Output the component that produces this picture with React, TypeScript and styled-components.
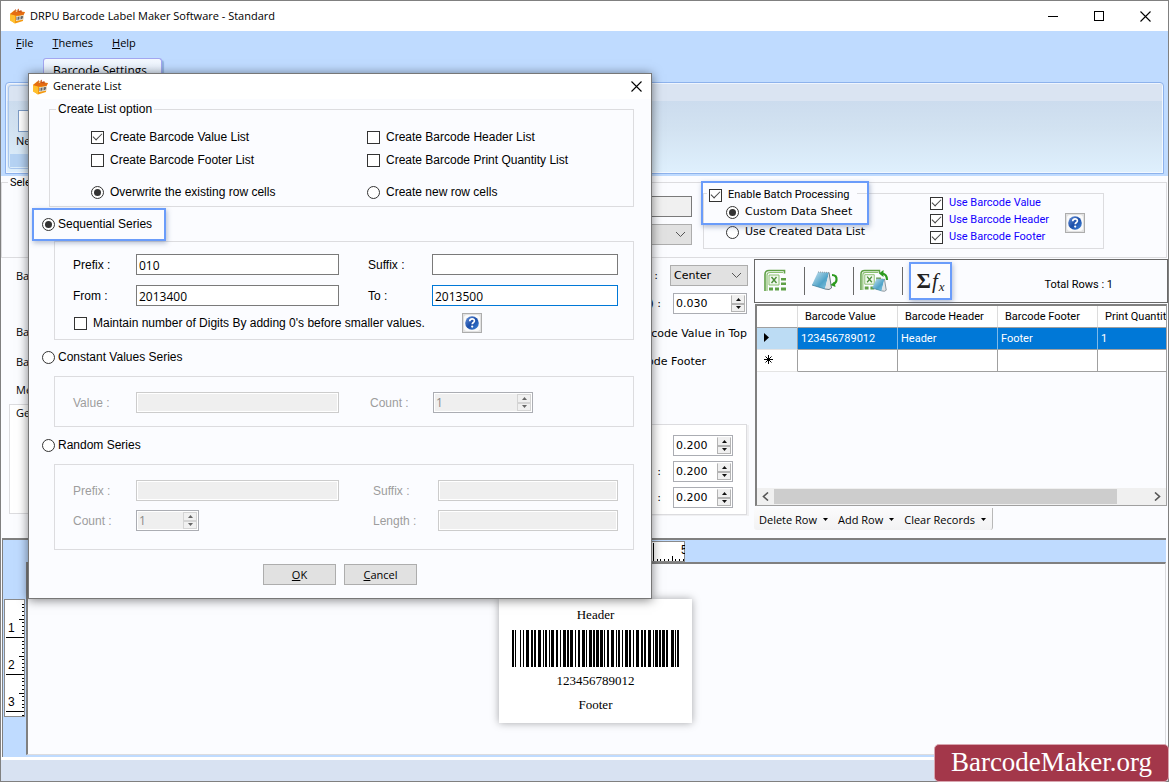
import React from 'react';
import styled, { createGlobalStyle, css } from 'styled-components';

const ui = '"Open Sans", "Noto Sans", sans-serif';
const sans = '"Liberation Sans", Arial, sans-serif';
const compact = 'Roboto, "Liberation Sans", sans-serif';
const wide = '"DejaVu Sans", Verdana, sans-serif';
const serif = '"Liberation Serif", "Times New Roman", serif';

const paper = '#fbfcff';
const sky = '#bfdbff';
const line = '#dcdcdf';
const accent = '#6a9cfa';

const GlobalStyle = createGlobalStyle`
  *, *::before, *::after { box-sizing: border-box; }
  body { margin: 0; font: 12px ${sans}; color: #000; }
  button, input, select { font: inherit; color: inherit; }
`;

/* ---------- shared controls ---------- */

const markBase = css`
  appearance: none;
  flex: none;
  display: grid;
  place-items: center;
  width: 13px;
  height: 13px;
  margin: 0;
  background: #fff;
  border: 1px solid #333;
`;

const Check = styled.input.attrs({ type: 'checkbox' })`
  ${markBase}
  &:checked::before {
    content: '';
    width: 9px;
    height: 5px;
    margin-top: -3px;
    border: solid #444;
    border-width: 0 0 1px 1px;
    transform: rotate(-45deg);
  }
`;

const Radio = styled.input.attrs({ type: 'radio' })`
  ${markBase}
  border-radius: 50%;
  &:checked::before {
    content: '';
    width: 7px;
    height: 7px;
    border-radius: 50%;
    background: #333;
  }
`;

const Choice = styled.label<{ $gap?: number }>`
  display: flex;
  align-items: center;
  gap: ${(p) => p.$gap ?? 6}px;
  height: 14px;
  line-height: 14px;
  white-space: nowrap;
`;

const TextBox = styled.input`
  width: 100%;
  height: 21px;
  padding: 2px 2px 0;
  border: 1px solid #7a7a7a;
  border-radius: 0;
  background: #fff;
  font: 12px ${ui};
  outline: none;
  &:disabled {
    border-color: #ccc;
    background: #efefef;
    box-shadow: inset 0 0 0 1px #fff;
  }
`;

const ActiveTextBox = styled(TextBox)`
  border-color: #0078d7;
`;

const SpinFrame = styled.div<{ $width: number }>`
  display: flex;
  width: ${(p) => p.$width}px;
  height: 21px;
  padding: 1px;
  border: 1px solid #abadb3;
  background: #fff;
`;

const SpinInput = styled.input<{ $font: string }>`
  flex: 1;
  min-width: 0;
  padding: 0 1px;
  border: 0;
  background: #fff;
  font: ${(p) => p.$font};
  outline: none;
  &:disabled { background: #efefef; color: #8a8a8a; }
`;

const SpinButtons = styled.div`
  display: grid;
  grid-template-rows: 1fr 1fr;
  width: 14px;
`;

const SpinButton = styled.button`
  display: grid;
  place-items: center;
  padding: 0;
  border: 1px solid #b4b4b4;
  background: #f0f0f0;
  color: #111;
  &:first-child { border-top-color: #f0f0f0; }
  &:disabled { color: #666; border-color: #d4d4d4; }
`;

const Up = () => (
  <svg width="5" height="3" viewBox="0 0 5 3"><path d="M0 3h5L2.500 0z" fill="currentColor" /></svg>
);
const Down = () => (
  <svg width="5" height="3" viewBox="0 0 5 3"><path d="M0 0h5L2.500 3z" fill="currentColor" /></svg>
);

function Spin({ id, label, value, width, font, disabled }: {
  id?: string; label?: string; value: string; width: number; font: string; disabled?: boolean;
}) {
  return (
    <SpinFrame $width={width}>
      <SpinInput id={id} aria-label={label} defaultValue={value} $font={font} disabled={disabled} />
      <SpinButtons>
        <SpinButton type="button" aria-label="Increase" disabled={disabled}><Up /></SpinButton>
        <SpinButton type="button" aria-label="Decrease" disabled={disabled}><Down /></SpinButton>
      </SpinButtons>
    </SpinFrame>
  );
}

const SelectFrame = styled.div<{ $width: number; $size: number }>`
  display: grid;
  grid-template-columns: 1fr 16px;
  align-items: center;
  width: ${(p) => p.$width}px;
  height: 21px;
  border: 1px solid #adadad;
  background: #e1e1e1;
  color: #333;
  select {
    grid-area: 1 / 1 / 2 / 3;
    appearance: none;
    height: 19px;
    padding: 0 3px;
    border: 0;
    background: transparent;
    color: #000;
    font: ${(p) => p.$size}px ${wide};
  }
  svg { grid-area: 1 / 2; pointer-events: none; }
`;

const Chevron = () => (
  <svg width="11" height="7" viewBox="0 0 11 7"><path d="M1 1l4.500 4.500L10 1" fill="none" stroke="#555" /></svg>
);

const HelpButton = styled.button`
  display: grid;
  place-items: center;
  flex: none;
  width: 20px;
  height: 20px;
  padding: 0;
  border: 1px solid #adadad;
  background: #e1e1e1;
`;

const HelpIcon = () => (
  <svg width="16" height="16" viewBox="0 0 16 16">
    <defs>
      <linearGradient id="orb" x1="0" y1="0" x2="1" y2="1">
        <stop offset="0" stopColor="#6b96dc" />
        <stop offset="0.500" stopColor="#1c4ea8" />
        <stop offset="1" stopColor="#3f86dc" />
      </linearGradient>
    </defs>
    <rect width="16" height="16" rx="3" fill="#fafafa" />
    <circle cx="8" cy="8" r="6.800" fill="url(#orb)" />
    <path d="M5.700 6.200c0-3.200 4.900-3 4.700-.2-.1 1.500-2.200 1.600-2.200 3.300" fill="none" stroke="#fff" strokeWidth="1.700" />
    <circle cx="8.200" cy="11.600" r="1.100" fill="#fff" />
  </svg>
);

const Group = styled.fieldset`
  min-width: 0;
  margin: 0;
  padding: 0;
  border: 1px solid ${line};
`;

const glow = css`
  border: 2px solid ${accent};
  box-shadow: 1px 2px 5px rgba(90, 110, 150, 0.45);
`;

/* ---------- icons ---------- */

const AppIcon = () => (
  <svg width="17" height="16" viewBox="0 0 17 16">
    <path d="M1 6l4-3.500 11 1.500-1.500 2L14 13 6 15.500 1 12z" fill="#f59a11" />
    <path d="M1 6l5 1.200V15.500L1 12.500z" fill="#ffc02e" />
    <path d="M1 6l4.500-3 10.500 1.300L14.500 7 6 7.500z" fill="#e56d12" />
    <path d="M5 3.500l1.500-2.500 1 2 2-2.500.8 2.500 2-1 .7 2.500z" fill="#c9531a" />
    <path d="M6.500 3l1.500.5 1-1.200" stroke="#ffe08a" fill="none" />
    <path d="M7 8.500l7.500-1.500v4.500L7 13z" fill="#e9e6df" />
    <path d="M8 9v3M9.500 8.700v3M11 8.400v3M12.500 8.100v3M13.600 8v2.500" stroke="#444" strokeWidth=".8" />
  </svg>
);

const SheetShape = ({ s }: { s: number }) => (
  <g transform={`scale(${s})`}>
    <path d="M1 22V5.500Q1 1.500 5 1.500h15.500v3" fill="none" stroke="#5fa046" strokeWidth="1.600" />
    <path d="M3 22V6Q3 3.500 6 3.500h13" fill="none" stroke="#8cc070" strokeWidth="1.200" />
    <path d="M5 6h10v10H5z" fill="#f2f8ef" stroke="#8cc070" />
    <path d="M7.500 8l5 6M12.500 8l-5 6" stroke="#4d8f3a" strokeWidth="1.400" />
    <path d="M17 9h5v2.400h-5zM17 13.500h5v2.400h-5zM17 18.500h5v3h-5zM11 18.500h4v3h-4zM5 18.500h4v3H5z" fill="#5fa046" />
  </g>
);

const NoteShape = () => (
  <g>
    <defs>
      <linearGradient id="note" x1="0" y1="0" x2="1" y2="1">
        <stop offset="0" stopColor="#cfe6f2" />
        <stop offset="0.600" stopColor="#4fa3c8" />
        <stop offset="1" stopColor="#8dc8e2" />
      </linearGradient>
    </defs>
    <path d="M7 3l11 .5-4 16.500L1 16z" fill="url(#note)" />
    <path d="M18 3.500l3 15-3 2-4-.5z" fill="#dfe3e6" />
    <path d="M18 3.500l2.500 15.500M14 20l4 .5 2.500-1.500" fill="none" stroke="#5b6b75" strokeWidth=".9" />
    <path d="M1 16l13 4" stroke="#3d7f9e" strokeWidth=".8" />
    <path d="M7 3l11 .5" stroke="#8a979e" strokeDasharray="1 1" />
  </g>
);

const ExcelIcon = () => (
  <svg width="24" height="24" viewBox="0 0 24 24"><SheetShape s={1} /></svg>
);

const ImportIcon = () => (
  <svg width="28" height="24" viewBox="0 0 28 24">
    <NoteShape />
    <path d="M21 6q5 0 4.500 5-.3 3-3 4" fill="none" stroke="#2c9a1f" strokeWidth="2.200" />
    <path d="M24.500 18l-5-2 4-3.500z" fill="#2c9a1f" />
  </svg>
);

const ExportIcon = () => (
  <svg width="29" height="24" viewBox="0 0 29 24">
    <SheetShape s={0.95} />
    <g transform="translate(11.500 7.500) scale(.72)"><NoteShape /></g>
    <path d="M27 11q0-6-5-6.500" fill="none" stroke="#2c9a1f" strokeWidth="2.200" />
    <path d="M19 4.500l4.500-3.500v7z" fill="#2c9a1f" />
  </svg>
);

/* ---------- main window ---------- */

const Window = styled.div`
  position: relative;
  display: flex;
  flex-direction: column;
  min-width: 1169px;
  min-height: 100vh;
  border: 1px solid #808080;
  background: ${paper};
`;

const TitleBar = styled.header`
  display: flex;
  align-items: center;
  height: 30px;
  padding-left: 8px;
  background: #fff;
  font: 11px ${ui};
`;

const Caption = styled.h1`
  flex: 1;
  margin: 0;
  padding: 0 0 2px 4px;
  font: inherit;
`;

const WindowButton = styled.button`
  display: grid;
  place-items: center;
  width: 46px;
  height: 28px;
  padding: 0;
  border: 0;
  background: transparent;
`;

const MenuBar = styled.nav`
  display: flex;
  gap: 19px;
  height: 27px;
  padding: 4px 15px;
  background: ${sky};
  font: 11px/16px ${ui};
`;

const MenuItem = styled.a`
  color: #000;
  text-decoration: none;
`;

const Ribbon = styled.section`
  padding: 0 4px 2px;
  background: ${sky};
`;

const Tab = styled.button`
  display: block;
  width: 119px;
  height: 24px;
  margin-left: 38px;
  padding: 0 0 0 9px;
  border: 1px solid #a3a6f0;
  border-bottom: 0;
  border-radius: 3px 3px 0 0;
  background: linear-gradient(#f4f9ff, #d6e4f6);
  box-shadow: 2px 2px 1px #8fb0e0;
  font: 12px/20px ${ui};
  text-align: left;
`;

const RibbonPanel = styled.div`
  height: 92px;
  padding: 2px;
  border: 1px solid #8db2ec;
  border-radius: 4px 4px 0 0;
  background: linear-gradient(#dae4f2 18px, #ccdcee 18px, #d2e2f1 50%, #dff0fd);
  box-shadow: inset -1px -1px 0 #f2f8ff, inset 1px 1px 0 #eef5ff;
`;

const RibbonGroup = styled.div`
  display: flex;
  flex-direction: column;
  justify-content: space-between;
  width: 120px;
  height: 84px;
  padding: 24px 1px 1px;
  border: 1px solid #a9c6ee;
  border-radius: 3px;
`;

const RibbonButton = styled.button`
  display: flex;
  flex-direction: column;
  align-items: flex-start;
  gap: 2px;
  padding: 0 6px;
  border: 0;
  background: transparent;
  font: 11px/14px ${ui};
`;

const NewPage = styled.span`
  width: 18px;
  height: 22px;
  margin-left: 2px;
  border: 1px solid #7d9cc6;
  background: #fff;
`;

const RibbonFoot = styled.div`
  height: 13px;
  background: #b5d2f3;
`;

const TopGroup = styled(Group)`
  height: 82px;
  margin-right: 1px;
  legend { margin-left: 6px; padding: 0 2px; font: 11px/13px ${compact}; }
`;

const TopRow = styled.div`
  display: flex;
  gap: 11px;
  margin-top: -5px;
`;

const TypeColumn = styled.div`
  display: flex;
  flex-direction: column;
  align-items: flex-end;
  gap: 7px;
  width: 690px;
  padding-top: 12px;
`;

const TypeBox = styled(TextBox)`
  width: 200px;
  background: #f0f0f0;
`;

const BatchGroup = styled(Group)`
  position: relative;
  width: 401px;
  height: 65px;
  font: 11px ${wide};
  legend { margin-left: 3px; padding: 4px 8px 0 2px; font: 11px ${compact}; background: ${paper}; }
`;

const BatchRow = styled.div`
  display: flex;
  padding-left: 22px;
`;

const BatchModes = styled.div`
  display: flex;
  flex-direction: column;
  gap: 6px;
  width: 204px;
  padding-top: 3px;
`;

const BatchFields = styled.div`
  display: flex;
  flex-direction: column;
  gap: 3px;
  width: 135px;
  margin-top: -6px;
  color: #1400ff;
  font: 11px ${compact};
`;

const BatchHelp = styled.div`
  padding-top: 11px;
`;

const BatchGlow = styled.div`
  position: absolute;
  left: -3px;
  top: -21px;
  width: 168px;
  height: 44px;
  pointer-events: none;
  ${glow}
`;

const Middle = styled.section`
  display: flex;
  height: 280px;
`;

const Settings = styled.div`
  display: flex;
  justify-content: space-between;
  width: 753px;
  padding: 0 6px 0 8px;
`;

const Labels = styled.div`
  width: 110px;
  font: 11px ${ui};
`;

const LabelLine = styled.div<{ $height: number }>`
  height: ${(p) => p.$height}px;
  padding-left: 7px;
  line-height: ${(p) => p.$height}px;
`;

const GeneralBox = styled(LabelLine)`
  margin-top: 2px;
  padding-left: 6px;
  border: 1px solid ${line};
  background: #fff;
  line-height: 16px;
`;

const Options = styled.div`
  display: flex;
  flex-direction: column;
  width: 160px;
  padding-top: 7px;
  font: 11px ${wide};
`;

const OptionLine = styled.label<{ $after: number; $right?: number }>`
  display: flex;
  align-items: center;
  justify-content: flex-end;
  gap: 12px;
  min-height: 16px;
  margin: 0 ${(p) => p.$right ?? 0}px ${(p) => p.$after}px 0;
  white-space: nowrap;
`;

const MarginBox = styled.div`
  display: flex;
  flex-direction: column;
  gap: 5px;
  height: 91px;
  margin-right: 1px;
  padding-top: 10px;
  border: 1px solid ${line};
  border-left: 0;
  background: #fff;
  box-shadow: 2px 1px 0 #f0f0f2;
`;

/* ---------- data sheet ---------- */

const Sheet = styled.div`
  display: flex;
  flex: 1;
  flex-direction: column;
  min-width: 0;
  padding-top: 1px;
`;

const SheetTools = styled.div`
  display: flex;
  align-items: center;
  height: 44px;
  padding-left: 1px;
  border: 1px solid #696969;
`;

const SheetTool = styled.button`
  display: grid;
  place-items: center;
  width: 49px;
  height: 28px;
  padding: 0 8px 0 0;
  border: 0;
  border-right: 1px solid #696969;
  background: transparent;
`;

const FormulaTool = styled.button`
  display: flex;
  align-items: center;
  justify-content: center;
  gap: 1px;
  width: 43px;
  height: 38px;
  margin-left: 6px;
  padding: 0;
  background: ${paper};
  color: #222;
  font: bold 22px/30px ${serif};
  ${glow}
  i { font: italic 21px/30px ${serif}; }
  sub { font: italic 13px/14px ${serif}; align-self: flex-end; padding-bottom: 4px; }
`;

const Total = styled.output`
  margin-left: auto;
  padding: 6px 54px 0 0;
  font: 11px ${compact};
`;

const Grid = styled.div`
  display: flex;
  flex: 1;
  flex-direction: column;
  min-height: 0;
  margin: 1px 1px 0 1px;
  border: 1px solid #a0a0a0;
  border-width: 2px 1px 1px 2px;
  border-top-color: #808080;
  border-left-color: #808080;
`;

const TableClip = styled.div`
  flex: 1;
  overflow: hidden;
`;

const Table = styled.table`
  width: 441px;
  table-layout: fixed;
  border-collapse: separate;
  border-spacing: 0;
  font: 11px ${compact};
  th, td {
    padding: 0 3px;
    border: solid #a0a0a0;
    border-width: 0 1px 1px 0;
    text-align: left;
    white-space: nowrap;
    font-weight: normal;
  }
  thead th { height: 22px; padding: 0 7px; border-right-color: #dcdcdc; background: #fff; }
  td, tbody th { height: 22px; background: #fff; }
  tbody th { border-color: #e4e4e4; border-right-color: #a0a0a0; padding-left: 7px; }
  tbody tr:first-child th { background: #bcdcf4; }
  tbody tr:first-child td { background: #0078d7; color: #fff; border-right-color: #7db9ea; }
`;

const IndexCol = styled.col`width: 41px;`;
const DataCol = styled.col`width: 100px;`;

const ScrollBar = styled.div`
  display: flex;
  height: 17px;
  background: #f0f0f0;
`;

const ScrollButton = styled.button`
  display: grid;
  place-items: center;
  width: 17px;
  padding: 0;
  border: 0;
  background: #f0f0f0;
`;

const Thumb = styled.div`
  flex: 1;
  height: 15px;
  margin: 1px 32px 0 0;
  background: #cdcdcd;
`;

const RowTools = styled.div`
  display: flex;
  gap: 10px;
  align-self: flex-start;
  height: 22px;
  margin: 2px 0 8px;
  padding: 0 6px 0 5px;
  border-right: 1px solid #b8b8b8;
  border-radius: 0 0 3px 3px;
  background: linear-gradient(#fbfbfc, #f2f2f3);
`;

const RowTool = styled.button`
  display: flex;
  align-items: center;
  gap: 6px;
  padding: 0;
  border: 0;
  background: transparent;
  white-space: nowrap;
  font: 11px ${ui};
`;

/* ---------- design canvas ---------- */

const Designer = styled.section`
  display: grid;
  flex: 1;
  grid-template-columns: 23px 1fr;
  grid-template-rows: 22px 1fr;
  min-height: 218px;
  margin: 0 2px 0 1px;
  border: solid #808080;
  border-width: 2px 0 0 1px;
  background: ${sky};
`;

const TopRuler = styled.div`
  grid-column: 1 / 3;
  padding: 1px 0 0 501px;
  line-height: 0;
`;

const SideRuler = styled.div`
  padding: 37px 0 0 1px;
`;

const Canvas = styled.div`
  display: flex;
  justify-content: center;
  margin-bottom: 2px;
  padding-top: 35px;
  border: solid #808080;
  border-width: 2px 1px 1px 2px;
  border-right-color: ${line};
  border-bottom-color: ${line};
  background: ${paper};
`;

const LabelCard = styled.figure`
  display: flex;
  flex-direction: column;
  align-items: center;
  width: 193px;
  height: 124px;
  margin: 0 2px 0 0;
  padding: 8px 6px 0;
  background: #fff;
  box-shadow: 0 0 8px rgba(0, 0, 0, 0.35);
  font: 13px/16px ${serif};
`;

const Bars = styled.svg`
  display: block;
  margin: 7px 0 6px;
`;

const CardFooter = styled.span`
  margin-top: 8px;
`;

const StatusBar = styled.footer`
  height: 24px;
  border-top: 3px solid #fff;
  background: #d8e2f2;
`;

const Brand = styled.a`
  position: absolute;
  right: -1px;
  bottom: -1px;
  width: 235px;
  height: 38px;
  border: 1px solid #d8a6b0;
  border-radius: 5px;
  background: #a3374a;
  color: #fff;
  font: 27px/34px ${serif};
  text-align: center;
  text-decoration: none;
`;

/* ---------- dialog ---------- */

const Dialog = styled.div`
  position: absolute;
  left: 27px;
  top: 72px;
  width: 624px;
  height: 526px;
  border: 1px solid #777;
  background: ${paper};
  box-shadow: 0 1px 10px rgba(0, 0, 0, 0.5);
`;

const DialogTitle = styled.header`
  display: flex;
  align-items: center;
  height: 25px;
  padding-left: 3px;
  background: #fff;
  font: 11px ${ui};
`;

const DialogCaption = styled(Caption).attrs({ as: 'h2' })``;

const DialogClose = styled(WindowButton)`
  width: 30px;
  height: 25px;
`;

const DialogBody = styled.form`
  padding: 3px 17px 0 13px;
`;

const ListOptions = styled(Group)`
  height: 105px;
  margin-left: 7px;
  legend { margin-left: 6px; padding: 0 2px; line-height: 14px; }
`;

const OptionGrid = styled.div`
  display: grid;
  grid-template-columns: 276px 1fr;
  row-gap: 9px;
  padding: 14px 0 0 41px;
`;

const Wide = styled.div`
  grid-column: 1 / 3;
  height: 0;
`;

const SeriesHighlight = styled.div`
  width: 134px;
  height: 33px;
  margin: 1px 0 0 -10px;
  padding: 7px 0 0 8px;
  background: ${paper};
  position: relative;
  ${glow}
`;

const SeriesChoice = styled.div<{ $top: number }>`
  padding: ${(p) => p.$top}px 0 12px;
`;

const Series = styled(Group)<{ $height: number; $lift?: number }>`
  height: ${(p) => p.$height}px;
  margin: ${(p) => p.$lift ?? 0}px 0 0 12px;
  &:disabled { color: #9d9d9d; }
`;

const Fields = styled.div<{ $right: string; $gap: number; $top: number }>`
  display: grid;
  grid-template-columns: 63px 203px ${(p) => p.$right};
  align-items: center;
  row-gap: ${(p) => p.$gap}px;
  padding: ${(p) => p.$top}px 0 0 18px;
`;

const Name = styled.label`
  line-height: 18px;
  white-space: nowrap;
`;

const Second = styled(Name)`
  grid-column: 4;
`;

const DigitsRow = styled.div`
  display: flex;
  align-items: center;
  gap: 37px;
  padding: 7px 0 0 19px;
`;

const Actions = styled.div`
  display: flex;
  justify-content: center;
  gap: 8px;
  padding: 14px 0 0 4px;
`;

const ActionButton = styled.button`
  width: 73px;
  height: 21px;
  padding: 0;
  border: 1px solid #adadad;
  background: #e1e1e1;
  font: 11px ${ui};
`;

const CloseX = ({ size }: { size: number }) => (
  <svg width={size} height={size} viewBox="0 0 11 11"><path d="M.5.5l10 10M10.500.5l-10 10" stroke="#000" strokeWidth="1.100" /></svg>
);

/* Code 128 (set A) bar and gap widths for the digits 0-9. */
const digitBars = ['123122', '123221', '223211', '221132', '221231', '213212', '223112', '312131', '311222', '321122'];

function encode(text: string) {
  const check = (103 + [...text].reduce((sum, d, i) => sum + (i + 1) * (Number(d) + 16), 0)) % 103;
  return '211412' + [...text].map((d) => digitBars[Number(d)]).join('') + digitBars[check - 16] + '2331112';
}

function Barcode({ value }: { value: string }) {
  let x = 0;
  const rects: React.ReactNode[] = [];
  [...encode(value)].forEach((w, i) => {
    const width = Number(w);
    if (i % 2 === 0) rects.push(<rect key={i} x={x} y={0} width={width} height={37} />);
    x += width;
  });
  return <Bars width={x} height="37" viewBox={`0 0 ${x} 37`} shapeRendering="crispEdges">{rects}</Bars>;
}

const ticks = Array.from({ length: 50 }, (_, i) => i + 1);

const SideScale = () => (
  <svg width="21" height="118" viewBox="0 0 21 118" shapeRendering="crispEdges">
    <rect x=".5" y=".5" width="20" height="117" fill="#fff" stroke="#8a8a8a" />
    {ticks.filter((t) => t < 32).map((t) => {
      const y = Math.round(t * 3.7) + 1;
      const from = t % 10 === 0 ? 2 : t % 10 === 5 ? 15 : 18;
      return <rect key={t} x={from} y={y} width={20 - from} height="1" />;
    })}
    {[1, 2, 3].map((n) => (
      <text key={n} x="4" y={n * 37 - 4} fontFamily="Liberation Sans" fontSize="12">{n}</text>
    ))}
  </svg>
);

const TopScale = () => (
  <svg width="181" height="21" viewBox="0 0 181 21" shapeRendering="crispEdges">
    <rect x=".5" y=".5" width="180" height="20" fill="#fff" stroke="#8a8a8a" />
    {ticks.filter((t) => t < 49).map((t) => {
      const x = Math.round(t * 3.7) + 1;
      const from = t % 10 === 0 ? 2 : t % 10 === 5 ? 15 : 18;
      return <rect key={t} x={x} y={from} width="1" height={20 - from} />;
    })}
    <text x="177" y="13" fontFamily="Liberation Sans" fontSize="12">5</text>
  </svg>
);

const tiny = `11px ${wide}`;
const dialogFont = `12px ${ui}`;

export default function App() {
  return (
    <>
      <GlobalStyle />
      <Window>
        <TitleBar>
          <AppIcon />
          <Caption>DRPU Barcode Label Maker Software - Standard</Caption>
          <WindowButton aria-label="Minimize">
            <svg width="10" height="11" viewBox="0 0 10 11"><path d="M0 5.500h10" stroke="#000" /></svg>
          </WindowButton>
          <WindowButton aria-label="Maximize">
            <svg width="11" height="11" viewBox="0 0 11 11"><rect x=".5" y=".5" width="9" height="9" fill="none" stroke="#000" /></svg>
          </WindowButton>
          <WindowButton aria-label="Close"><CloseX size={11} /></WindowButton>
        </TitleBar>
        <MenuBar>
          <MenuItem href="#file"><u>F</u>ile</MenuItem>
          <MenuItem href="#themes"><u>T</u>hemes</MenuItem>
          <MenuItem href="#help"><u>H</u>elp</MenuItem>
        </MenuBar>
        <Ribbon>
          <Tab>Barcode Settings</Tab>
          <RibbonPanel>
            <RibbonGroup>
              <RibbonButton><NewPage />New</RibbonButton>
              <RibbonFoot />
            </RibbonGroup>
          </RibbonPanel>
        </Ribbon>

        <TopGroup>
          <legend>Select Barcode</legend>
          <TopRow>
            <TypeColumn>
              <TypeBox aria-label="Barcode technology" readOnly />
              <SelectFrame $width={200} $size={11}>
                <select aria-label="Barcode type" />
                <Chevron />
              </SelectFrame>
            </TypeColumn>
            <BatchGroup>
              <legend>
                <Choice><Check defaultChecked />Enable Batch Processing</Choice>
              </legend>
              <BatchRow>
                <BatchModes>
                  <Choice><Radio name="source" defaultChecked />Custom Data Sheet</Choice>
                  <Choice><Radio name="source" />Use Created Data List</Choice>
                </BatchModes>
                <BatchFields>
                  <Choice><Check defaultChecked />Use Barcode Value</Choice>
                  <Choice><Check defaultChecked />Use Barcode Header</Choice>
                  <Choice><Check defaultChecked />Use Barcode Footer</Choice>
                </BatchFields>
                <BatchHelp>
                  <HelpButton aria-label="Batch help"><HelpIcon /></HelpButton>
                </BatchHelp>
              </BatchRow>
              <BatchGlow />
            </BatchGroup>
          </TopRow>
        </TopGroup>

        <Middle>
          <Settings>
            <Labels>
              <LabelLine $height={36}>Barcode</LabelLine>
              <LabelLine $height={24} />
              <LabelLine $height={28}>Barcode</LabelLine>
              <LabelLine $height={32}>Barcode</LabelLine>
              <LabelLine $height={24}>Measure</LabelLine>
              <GeneralBox $height={110}>General</GeneralBox>
            </Labels>
            <Options>
              <OptionLine $after={7}>
                :
                <SelectFrame $width={78} $size={11}>
                  <select aria-label="Alignment"><option>Center</option></select>
                  <Chevron />
                </SelectFrame>
              </OptionLine>
              <OptionLine $after={11} $right={1}>
                ) :
                <Spin label="Bar width" value="0.030" width={74} font={tiny} />
              </OptionLine>
              <OptionLine $after={12} $right={1}>Barcode Value in Top</OptionLine>
              <OptionLine $after={55} $right={42}>Barcode Footer</OptionLine>
              <MarginBox>
                <OptionLine $after={0} $right={13}>
                  <Spin label="Left margin" value="0.200" width={60} font={tiny} />
                </OptionLine>
                <OptionLine $after={0} $right={13}>
                  :
                  <Spin label="Top margin" value="0.200" width={60} font={tiny} />
                </OptionLine>
                <OptionLine $after={0} $right={13}>
                  :
                  <Spin label="Right margin" value="0.200" width={60} font={tiny} />
                </OptionLine>
              </MarginBox>
            </Options>
          </Settings>

          <Sheet>
            <SheetTools>
              <SheetTool aria-label="Import sheet"><ExcelIcon /></SheetTool>
              <SheetTool aria-label="Load list"><ImportIcon /></SheetTool>
              <SheetTool aria-label="Export sheet"><ExportIcon /></SheetTool>
              <FormulaTool aria-label="Generate list">Σ<i>f</i><sub>x</sub></FormulaTool>
              <Total>Total Rows : 1</Total>
            </SheetTools>
            <Grid>
              <TableClip>
                <Table>
                  <colgroup><IndexCol /><DataCol /><DataCol /><DataCol /><DataCol /></colgroup>
                  <thead>
                    <tr><th /><th>Barcode Value</th><th>Barcode Header</th><th>Barcode Footer</th><th>Print Quantity</th></tr>
                  </thead>
                  <tbody>
                    <tr>
                      <th><svg width="6" height="9" viewBox="0 0 6 9"><path d="M0 0l5 4.500L0 9z" /></svg></th>
                      <td>123456789012</td><td>Header</td><td>Footer</td><td>1</td>
                    </tr>
                    <tr>
                      <th><svg width="9" height="9" viewBox="0 0 9 9"><path d="M4.500 0v9M0 4.500h9M1.500 1.500l6 6M7.500 1.500l-6 6" stroke="#000" /></svg></th>
                      <td /><td /><td /><td />
                    </tr>
                  </tbody>
                </Table>
              </TableClip>
              <ScrollBar>
                <ScrollButton aria-label="Scroll left">
                  <svg width="7" height="9" viewBox="0 0 7 9"><path d="M6 .5l-4.500 4 4.500 4" fill="none" stroke="#555" strokeWidth="1.600" /></svg>
                </ScrollButton>
                <Thumb />
                <ScrollButton aria-label="Scroll right">
                  <svg width="7" height="9" viewBox="0 0 7 9"><path d="M1 .5l4.500 4-4.500 4" fill="none" stroke="#555" strokeWidth="1.600" /></svg>
                </ScrollButton>
              </ScrollBar>
            </Grid>
            <RowTools>
              <RowTool>Delete Row <Down /></RowTool>
              <RowTool>Add Row <Down /></RowTool>
              <RowTool>Clear Records <Down /></RowTool>
            </RowTools>
          </Sheet>
        </Middle>

        <Designer>
          <TopRuler><TopScale /></TopRuler>
          <SideRuler><SideScale /></SideRuler>
          <Canvas>
            <LabelCard>
              <span>Header</span>
              <Barcode value="123456789012" />
              <span>123456789012</span>
              <CardFooter>Footer</CardFooter>
            </LabelCard>
          </Canvas>
        </Designer>
        <StatusBar />
        <Brand href="#home">BarcodeMaker.org</Brand>

        <Dialog role="dialog" aria-labelledby="dialog-title">
          <DialogTitle>
            <AppIcon />
            <DialogCaption id="dialog-title">Generate List</DialogCaption>
            <DialogClose aria-label="Close dialog"><CloseX size={11} /></DialogClose>
          </DialogTitle>
          <DialogBody onSubmit={(e) => e.preventDefault()}>
            <ListOptions>
              <legend>Create List option</legend>
              <OptionGrid>
                <Choice><Check defaultChecked />Create Barcode Value List</Choice>
                <Choice><Check />Create Barcode Header List</Choice>
                <Choice><Check />Create Barcode Footer List</Choice>
                <Choice><Check />Create Barcode Print Quantity List</Choice>
                <Wide />
                <Choice><Radio name="rows" defaultChecked />Overwrite the existing row cells</Choice>
                <Choice><Radio name="rows" />Create new row cells</Choice>
              </OptionGrid>
            </ListOptions>

            <SeriesHighlight>
              <Choice $gap={3}><Radio name="series" defaultChecked />Sequential Series</Choice>
            </SeriesHighlight>
            <Series $height={99}>
              <Fields $right="29px 64px 186px" $gap={10} $top={12}>
                <Name htmlFor="seq-prefix">Prefix :</Name>
                <TextBox id="seq-prefix" defaultValue="010" />
                <Second htmlFor="seq-suffix">Suffix :</Second>
                <TextBox id="seq-suffix" />
                <Name htmlFor="seq-from">From :</Name>
                <TextBox id="seq-from" defaultValue="2013400" />
                <Second htmlFor="seq-to">To :</Second>
                <ActiveTextBox id="seq-to" defaultValue="2013500" />
              </Fields>
              <DigitsRow>
                <Choice><Check />Maintain number of Digits By adding 0's before smaller values.</Choice>
                <HelpButton type="button" aria-label="Digits help"><HelpIcon /></HelpButton>
              </DigitsRow>
            </Series>

            <SeriesChoice $top={10}>
              <Choice $gap={3}><Radio name="series" />Constant Values Series</Choice>
            </SeriesChoice>
            <Series $height={51} disabled>
              <Fields $right="31px 63px 100px" $gap={9} $top={15}>
                <Name htmlFor="const-value">Value :</Name>
                <TextBox id="const-value" disabled />
                <Second htmlFor="const-count">Count :</Second>
                <Spin id="const-count" value="1" width={100} font={dialogFont} disabled />
              </Fields>
            </Series>

            <SeriesChoice $top={11}>
              <Choice $gap={3}><Radio name="series" />Random Series</Choice>
            </SeriesChoice>
            <Series $height={86} disabled>
              <Fields $right="34px 65px 180px" $gap={9} $top={15}>
                <Name htmlFor="rnd-prefix">Prefix :</Name>
                <TextBox id="rnd-prefix" disabled />
                <Second htmlFor="rnd-suffix">Suffix :</Second>
                <TextBox id="rnd-suffix" disabled />
                <Name htmlFor="rnd-count">Count :</Name>
                <Spin id="rnd-count" value="1" width={63} font={dialogFont} disabled />
                <Second htmlFor="rnd-length">Length :</Second>
                <TextBox id="rnd-length" disabled />
              </Fields>
            </Series>

            <Actions>
              <ActionButton><u>O</u>K</ActionButton>
              <ActionButton type="button"><u>C</u>ancel</ActionButton>
            </Actions>
          </DialogBody>
        </Dialog>
      </Window>
    </>
  );
}
